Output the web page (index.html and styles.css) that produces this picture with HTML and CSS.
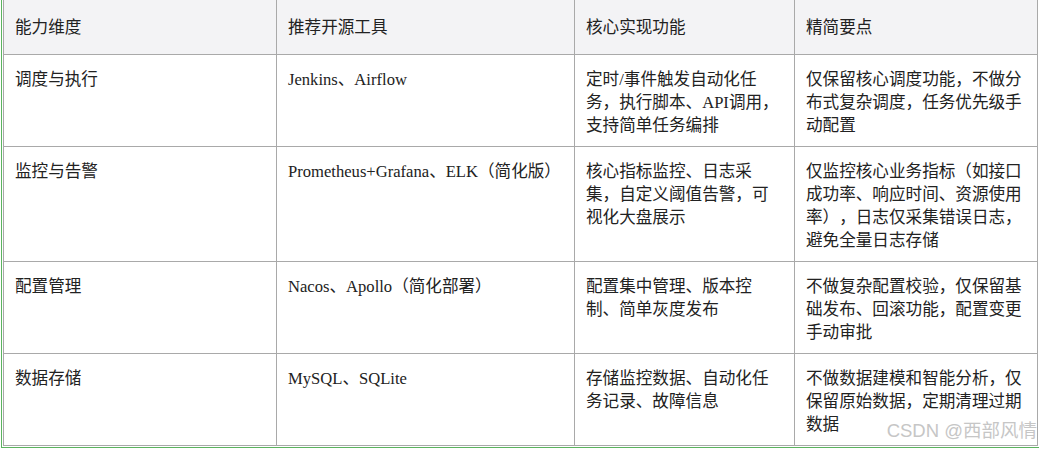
FILE: index.html
```html
<!DOCTYPE html>
<html lang="zh-CN">
<head>
<meta charset="utf-8">
<link rel="stylesheet" href="styles.css">
</head>
<body>
<div class="frame">
  <table class="grid">
    <colgroup>
      <col class="c1"><col class="c2"><col class="c3"><col class="c4">
    </colgroup>
    <thead>
      <tr><th>能力维度</th><th>推荐开源工具</th><th>核心实现功能</th><th>精简要点</th></tr>
    </thead>
    <tbody>
      <tr class="r3">
        <td>调度与执行</td>
        <td>Jenkins、Airflow</td>
        <td>定时/事件触发自动化任务，执行脚本、API调用，支持简单任务编排</td>
        <td>仅保留核心调度功能，不做分布式复杂调度，任务优先级手动配置</td>
      </tr>
      <tr>
        <td>监控与告警</td>
        <td>Prometheus+Grafana、ELK（简化版）</td>
        <td>核心指标监控、日志采集，自定义阈值告警，可视化大盘展示</td>
        <td>仅监控核心业务指标（如接口成功率、响应时间、资源使用率），日志仅采集错误日志，避免全量日志存储</td>
      </tr>
      <tr class="r3">
        <td>配置管理</td>
        <td>Nacos、Apollo（简化部署）</td>
        <td>配置集中管理、版本控制、简单灰度发布</td>
        <td>不做复杂配置校验，仅保留基础发布、回滚功能，配置变更手动审批</td>
      </tr>
      <tr class="r3">
        <td>数据存储</td>
        <td>MySQL、SQLite</td>
        <td>存储监控数据、自动化任务记录、故障信息</td>
        <td>不做数据建模和智能分析，仅保留原始数据，定期清理过期数据</td>
      </tr>
    </tbody>
  </table>
  <div class="watermark">CSDN @西部风情</div>
</div>
</body>
</html>
```

FILE: styles.css
```css
html, body {
  margin: 0;
  padding: 0;
  background: #ffffff;
}

body {
  font-family: "Liberation Serif", "Noto Sans CJK SC", serif;
  color: #222222;
}

.frame {
  position: relative;
  margin-left: 1px;
  width: 1038px;
  height: 448px;
  border-left: 1px solid #5bb35f;
  border-bottom: 1px solid #5bb35f;
  padding-left: 1px;
  box-sizing: border-box;
  overflow: hidden;
}

.grid {
  border-collapse: collapse;
  table-layout: fixed;
  width: 1035px;
  font-size: 16.6px;
  line-height: 23px;
  text-spacing-trim: space-all;
}

.c1 { width: 273px; }
.c2 { width: 298px; }
.c3 { width: 220px; }
.c4 { width: 243px; }

.grid th,
.grid td {
  border: 1px solid #a9a9a9;
  text-align: left;
  vertical-align: top;
  padding: 13px 11px 9px 11px;
  font-weight: normal;
}

.grid th {
  border-top: none;
  background: #f3f3f5;
  padding-top: 16px;
  padding-bottom: 15px;
}

.grid tr.r3 td {
  height: 69px;
}

.watermark {
  position: absolute;
  right: 2px;
  bottom: 5px;
  font-family: "Liberation Sans", "Noto Sans CJK SC", sans-serif;
  font-size: 18.5px;
  color: #c6c6c6;
}
```
